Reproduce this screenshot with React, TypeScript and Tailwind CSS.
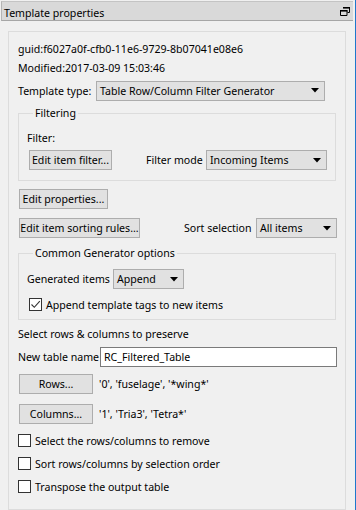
import type { ReactNode } from 'react';

function Arrow() {
  return (
    <svg width="8" height="5" viewBox="0 0 8 5" className="shrink-0">
      <path d="M0 0h8L4 4.5z" fill="#000" />
    </svg>
  );
}

function Button({ children, className }: { children: ReactNode; className: string }) {
  return (
    <div
      className={`flex h-[20px] shrink-0 items-center justify-center whitespace-nowrap border border-[#adadad] bg-[#e1e1e1] ${className}`}
    >
      {children}
    </div>
  );
}

function Combo({ text, className }: { text: string; className: string }) {
  return (
    <div
      className={`flex h-[20px] shrink-0 items-center justify-between whitespace-nowrap border border-[#adadad] bg-[#e1e1e1] pl-[3px] pr-[5px] ${className}`}
    >
      <span>{text}</span>
      <Arrow />
    </div>
  );
}

function Check({ label, checked, className }: { label: string; checked?: boolean; className: string }) {
  return (
    <div className={`flex h-[13px] items-center gap-[4px] whitespace-nowrap ${className}`}>
      <div className="flex h-[13px] w-[13px] shrink-0 items-center justify-center border border-[#333333] bg-white">
        {checked && (
          <svg width="11" height="11" viewBox="0 0 11 11">
            <path d="M1.5 5.5l2.8 2.8L9.8 2.2" fill="none" stroke="#333" strokeWidth="1.1" />
          </svg>
        )}
      </div>
      <span>{label}</span>
    </div>
  );
}

function Group({ title, children, className }: { title: string; children: ReactNode; className: string }) {
  return (
    <fieldset className={`w-[318px] border border-[#dcdcdc] px-[8px] ${className}`}>
      <legend className="ml-[6px] px-[2px] leading-[16px]">{title}</legend>
      {children}
    </fieldset>
  );
}

export default function App() {
  return (
    <div className="flex h-[510px] w-[356px] overflow-hidden whitespace-nowrap bg-[#f0f0f0] font-['Noto_Sans',sans-serif] text-[10.6px] leading-[18px] text-black">
      <div className="flex w-[355px] flex-col">
        <div className="mt-[1px] ml-[1px] flex h-[20px] w-[352px] items-center justify-between border-t border-b border-l border-t-[#c4c4c4] border-b-[#a6a6a6] border-l-[#b4b4b4] bg-[#d9d9d9] pt-[3px] pl-[2px] pr-[3px]">
          <span>Template properties</span>
          <svg width="10" height="10" viewBox="0 0 10 10" className="-mt-[3px]">
            <path d="M3 1.5h6.5v5h-2" fill="none" stroke="#000" strokeWidth="1" />
            <path d="M3 1h7v1.6H3z" fill="#000" />
            <path d="M0.5 4.5h6.5v5H0.5z" fill="#d9d9d9" stroke="#000" strokeWidth="1" />
            <path d="M0 4h7.5v1.6H0z" fill="#000" />
          </svg>
        </div>

        <div className="mt-[10px] ml-[8px] flex w-[338px] grow flex-col border border-[#dcdcdc] pt-[8px] pl-[9px]">
          <div className="h-[18px]">guid:f6027a0f-cfb0-11e6-9729-8b07041e08e6</div>
          <div className="mt-[1px] h-[18px]">Modified:2017-03-09 15:03:46</div>
          <div className="mt-[4px] flex h-[19px] items-center">
            <span className="w-[78px] shrink-0">Template type:</span>
            <Combo text="Table Row/Column Filter Generator" className="h-[19px] w-[229px]" />
          </div>

          <Group title="Filtering" className="mt-[5px] pb-[10px]">
            <div className="mt-[8px] h-[18px]">Filter:</div>
            <div className="mt-[3px] flex items-center">
              <Button className="ml-[2px] w-[83px]">Edit item filter...</Button>
              <span className="ml-[34px] w-[60px] shrink-0">Filter mode</span>
              <Combo text="Incoming Items" className="w-[121px]" />
            </div>
          </Group>

          <Button className="mt-[8px] ml-[1px] w-[89px]">Edit properties...</Button>

          <div className="mt-[9px] flex items-center">
            <Button className="ml-[1px] w-[121px]">Edit item sorting rules...</Button>
            <span className="ml-[44px] w-[72px] shrink-0">Sort selection</span>
            <Combo text="All items" className="w-[81px]" />
          </div>

          <Group title="Common Generator options" className="mt-[7px] pb-[8px]">
            <div className="mt-[8px] flex items-center">
              <span className="w-[86px] shrink-0">Generated items</span>
              <Combo text="Append" className="w-[71px]" />
            </div>
            <Check label="Append template tags to new items" checked className="mt-[9px] ml-[2px]" />
          </Group>

          <div className="mt-[5px] h-[18px]">Select rows &amp; columns to preserve</div>
          <div className="mt-[4px] flex items-center">
            <span className="w-[82px] shrink-0">New table name</span>
            <div className="flex h-[20px] w-[237px] items-center border border-[#7a7a7a] bg-white pl-[3px]">
              RC_Filtered_Table
            </div>
          </div>

          <div className="mt-[7px] flex items-center">
            <Button className="ml-[1px] w-[74px]">Rows...</Button>
            <span className="ml-[6px]">'0', 'fuselage', '*wing*'</span>
          </div>
          <div className="mt-[10px] flex items-center">
            <Button className="ml-[1px] w-[74px]">Columns...</Button>
            <span className="ml-[6px]">'1', 'Tria3', 'Tetra*'</span>
          </div>

          <Check label="Select the rows/columns to remove" className="mt-[10px]" />
          <Check label="Sort rows/columns by selection order" className="mt-[10px]" />
          <Check label="Transpose the output table" className="mt-[10px]" />
        </div>
      </div>
      <div className="w-[1px] bg-[#1e78cc]" />
    </div>
  );
}
